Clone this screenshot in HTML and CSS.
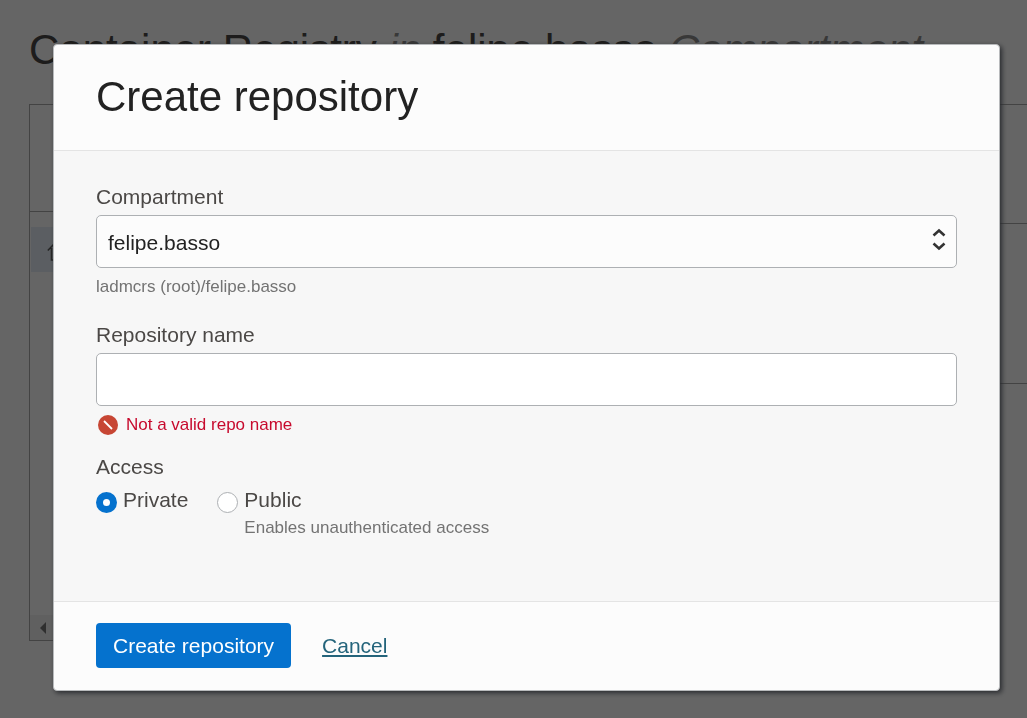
FILE: index.html
```html
<!DOCTYPE html>
<html lang="en">
<head>
<meta charset="utf-8">
<meta name="viewport" content="width=device-width, initial-scale=1">
<title>Container Registry</title>
<link rel="stylesheet" href="styles.css">
</head>
<body>
<main class="page">
  <h1 class="page-title">Container Registry <em>in</em> felipe.basso <em>Compartment</em></h1>
  <div class="columns">
    <section class="tree">
      <div class="tree-head"></div>
      <div class="tree-row">
        <svg width="22" height="24" viewBox="0 0 22 24" fill="none" stroke="#5c5c5c" stroke-width="1.6" aria-hidden="true"><path d="M.8 12.5 10 3l9.200 9.500M4.500 10v12h3.500v-7h4v7h3.500V10"/></svg>
      </div>
      <div class="tree-scroll">
        <svg width="6" height="12" viewBox="0 0 6 12" aria-hidden="true"><path d="M6 0v12L0 6z" fill="#777"/></svg>
      </div>
    </section>
    <section class="details">
      <div class="detail detail-head"></div>
      <div class="detail detail-body"></div>
    </section>
  </div>
</main>
<div class="overlay">
  <form class="modal" role="dialog" aria-modal="true" aria-labelledby="modal-title">
    <header class="modal-head">
      <h2 class="modal-title" id="modal-title">Create repository</h2>
    </header>
    <div class="modal-body">
      <div class="field">
        <label class="label" for="compartment">Compartment</label>
        <div class="select-wrap">
          <select class="control select" id="compartment"><option>felipe.basso</option></select>
          <svg class="select-icon" width="14" height="24" viewBox="0 0 14 24" fill="none" stroke="#333" stroke-width="2.6" aria-hidden="true"><path d="m1.500 7.500 5.500-5 5.500 5M1.500 15.500l5.500 5 5.500-5"/></svg>
        </div>
        <p class="hint">ladmcrs (root)/felipe.basso</p>
      </div>
      <div class="field">
        <label class="label" for="repo-name">Repository name</label>
        <input class="control" id="repo-name" type="text" aria-describedby="repo-error">
        <p class="error" id="repo-error">
          <svg width="20" height="20" viewBox="0 0 20 20" aria-hidden="true"><circle cx="10" cy="10" r="10" fill="#c74634"/><path d="m6 6 8 8" stroke="#fff" stroke-width="1.8"/></svg>
          Not a valid repo name
        </p>
      </div>
      <fieldset class="access">
        <legend class="label">Access</legend>
        <div class="options">
          <div class="option">
            <input class="radio" type="radio" name="access" id="private" checked>
            <label class="label" for="private">Private</label>
          </div>
          <div class="option">
            <input class="radio" type="radio" name="access" id="public" aria-describedby="public-hint">
            <div>
              <label class="label" for="public">Public</label>
              <p class="option-hint" id="public-hint">Enables unauthenticated access</p>
            </div>
          </div>
        </div>
      </fieldset>
    </div>
    <footer class="modal-foot">
      <button class="submit" type="submit">Create repository</button>
      <a class="cancel" href="#">Cancel</a>
    </footer>
  </form>
</div>
</body>
</html>
```
FILE: styles.css
```css
* {
  box-sizing: border-box;
}

body {
  margin: 0;
  background: #fcfcfc;
  color: #4b4846;
  font-family: "Liberation Sans", Arial, sans-serif;
  font-size: 21px;
  line-height: 24px;
  overflow: hidden;
}

h1, h2, p {
  margin: 0;
}

.page {
  padding: 26px 0 0 29px;
}

.page-title {
  color: #4a4846;
  font-size: 42px;
  font-weight: 400;
  line-height: 48px;
  white-space: nowrap;
}

.page-title em {
  color: #8c8c8c;
}

.columns {
  display: flex;
  gap: 48px;
  padding-top: 30px;
}

.tree {
  display: flex;
  flex-direction: column;
  flex: 0 0 25%;
  height: 537px;
  border: 1px solid #a8a8a8;
}

.tree-head {
  height: 107px;
  margin-bottom: 15px;
  border-bottom: 1px solid #a8a8a8;
}

.tree-row {
  display: flex;
  align-items: center;
  height: 45px;
  margin-left: 1px;
  padding-left: 16px;
  background: #e4ecf5;
}

.tree-scroll {
  display: flex;
  align-items: center;
  height: 25px;
  margin-top: auto;
  padding-left: 10px;
  background: #f1f1f1;
}

.details {
  flex: 1;
}

.detail {
  border-top: 1px solid #a8a8a8;
}

.detail-head {
  height: 119px;
}

.detail-body {
  height: 161px;
  border-bottom: 1px solid #a8a8a8;
}

.overlay {
  position: fixed;
  inset: 0;
  padding: 44px 27px 27px 53px;
  background: rgba(0, 0, 0, 0.6);
}

.modal {
  overflow: hidden;
  border: 1px solid #b8babc;
  border-radius: 4px;
  background: #fcfcfc;
  box-shadow: 2px 2px 5px #292b2f;
}

.modal-head {
  padding: 28px 42px 29px;
  border-bottom: 1px solid #e4e4e4;
}

.modal-title {
  color: #222;
  font-size: 42px;
  font-weight: 400;
  line-height: 48px;
}

.modal-body {
  display: flex;
  flex-direction: column;
  padding: 34px 42px 63px;
  background: #f7f7f7;
}

.label {
  display: block;
  padding: 0;
}

.control {
  display: block;
  width: 100%;
  height: 53px;
  margin-top: 6px;
  padding: 0 11px;
  border: 1px solid #adb0b3;
  border-radius: 5px;
  background: #fff;
  color: #222;
  font: inherit;
}

.select-wrap {
  position: relative;
}

.select {
  appearance: none;
  padding-top: 2px;
  background: #fcfcfc;
}

.select-icon {
  position: absolute;
  top: 13px;
  right: 11px;
  pointer-events: none;
}

.hint, .option-hint {
  color: #737373;
  font-size: 17px;
  line-height: 20px;
}

.hint {
  margin: 9px 0 26px;
}

.error {
  display: flex;
  align-items: center;
  gap: 8px;
  margin: 9px 0 20px;
  padding-left: 2px;
  color: #c70a2d;
  font-size: 17px;
  line-height: 20px;
}

.access {
  margin: 0;
  padding: 0;
  border: 0;
}

.options {
  display: flex;
  gap: 29px;
  padding-top: 9px;
}

.option {
  display: flex;
  align-items: flex-start;
  gap: 6px;
}

.option-hint {
  margin-top: 6px;
}

.radio {
  appearance: none;
  flex: none;
  width: 21px;
  height: 21px;
  margin: 4px 0 0;
  border: 1px solid #adb0b3;
  border-radius: 50%;
  background: #fff;
}

.radio:checked {
  border: 7px solid #0572ce;
}

.modal-foot {
  display: flex;
  align-items: center;
  gap: 31px;
  padding: 21px 42px 22px;
  border-top: 1px solid #e4e4e4;
}

.submit {
  height: 45px;
  padding: 0 17px;
  border: 0;
  border-radius: 4px;
  background: #0572ce;
  color: #fff;
  font: inherit;
}

.cancel {
  color: #24647b;
  text-decoration-thickness: 2px;
  text-underline-offset: 2px;
}
```
